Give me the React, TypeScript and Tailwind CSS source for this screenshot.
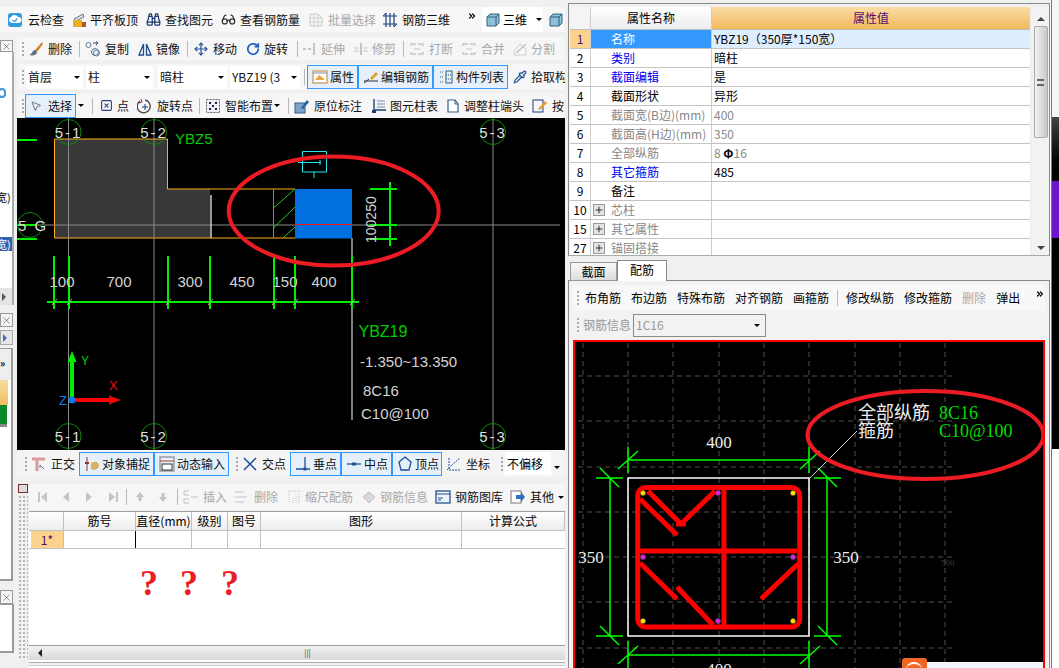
import React from "react";
import {
  Binoculars, Glasses, Move, RotateCw, Pipette, MousePointer2, SquareX, ChevronsRight, Plus, X,
} from "lucide-react";

const CJK = "font-['Noto_Sans_CJK_SC','Liberation_Sans',sans-serif]";

const Arrow = () => (
  <span className="inline-block shrink-0 w-0 h-0 border-x-[3px] border-x-transparent border-t-[3px] border-t-black" />
);

const Sep = ({ r = "" }: { r?: string }) => <span className={`w-px h-4 bg-[#b8b8b8] shrink-0 ${r}`} />;

const Handle = () => (
  <span className="flex flex-col gap-[2px] w-[3px] mr-[3px] ml-[2px] shrink-0">
    <i className="w-[2px] h-[2px] bg-[#aaa]" />
    <i className="w-[2px] h-[2px] bg-[#aaa]" />
    <i className="w-[2px] h-[2px] bg-[#aaa]" />
    <i className="w-[2px] h-[2px] bg-[#aaa]" />
  </span>
);

// small hand drawn toolbar glyphs, 16 box
const G = ({ children }: { children: React.ReactNode }) => (
  <svg width="16" height="16" viewBox="0 0 16 16" fill="none" className="shrink-0">
    {children}
  </svg>
);

const icons: Record<string, React.ReactNode> = {
  cloud: (
    <G>
      <rect x="1" y="1" width="14" height="14" rx="3" fill="#2f9be0" />
      <path d="M3 10a3 3 0 0 1 1-5 4 4 0 0 1 7 0 3 3 0 0 1 1 6H5z" fill="#fff" />
      <path d="M5.500 8l2 1.500 3-3" stroke="#2f9be0" strokeWidth="1.200" />
    </G>
  ),
  slab: (
    <G>
      <path d="M3 7l9-5 1 3-8 4z" fill="#d8dde2" stroke="#6a7a88" />
      <rect x="2" y="8" width="9" height="7" fill="#e8b020" />
      <rect x="11" y="10" width="4" height="5" fill="#a85a28" />
    </G>
  ),
  batch: (
    <G>
      <path d="M2 2h8l4 4v8H2z" stroke="#c8c8c8" />
      <path d="M2 6h12M2 10h12M6 2v12M10 2v12" stroke="#d0d0d0" />
    </G>
  ),
  rebar3d: (
    <G>
      <path d="M1 4h14M1 12h14M4 1v14M8 1v14M12 1v14" stroke="#1d3f7c" strokeWidth="1.200" />
      <path d="M1 4l3-3M12 15l3-3" stroke="#1d3f7c" />
    </G>
  ),
  cube: (
    <G>
      <path d="M2 5l3-3h9v9l-3 3H2z" fill="#8ec0dc" stroke="#34607c" />
      <path d="M2 5h9v9M11 5l3-3" stroke="#34607c" />
    </G>
  ),
  brush: (
    <G>
      <path d="M14 1L7 9l2 2 6-8z" fill="#d08030" />
      <path d="M7 9c-3 0-2 4-6 5 4 1 8 0 8-3z" fill="#5a6f8c" />
    </G>
  ),
  copy: (
    <G>
      <circle cx="3.500" cy="4" r="2.500" stroke="#5a7a9c" />
      <circle cx="10" cy="11" r="3.500" stroke="#5a7a9c" />
      <circle cx="11.500" cy="12" r="3" stroke="#5a7a9c" />
      <path d="M8 2h5l-2-1.500M13 2l-2 2" stroke="#33506e" />
    </G>
  ),
  mirror: (
    <G>
      <path d="M6.500 3L2 14h4.500zM9.500 3L14 14H9.500z" stroke="#1f4f8c" strokeWidth="1.300" />
    </G>
  ),
  extend: (
    <G>
      <path d="M1 8h3M6 8h3" stroke="#c4c4c4" strokeWidth="2" />
      <path d="M12 2v12" stroke="#c4c4c4" strokeWidth="2" />
    </G>
  ),
  trim: (
    <G>
      <path d="M1 7h5M1 10h5M10 7h5M10 10h5" stroke="#c4c4c4" />
      <path d="M8 2v12" stroke="#c4c4c4" strokeWidth="2" />
    </G>
  ),
  breakk: (
    <G>
      <path d="M2 5V3h5M9 3h5v2M2 11v2h5M9 13h5v-2" stroke="#c4c4c4" strokeWidth="1.300" />
      <path d="M5 8h6" stroke="#c4c4c4" />
    </G>
  ),
  split: (
    <G>
      <path d="M2 14h12V8L8 3 2 10z" stroke="#cfcfcf" />
      <path d="M4 12l10-9" stroke="#c4c4c4" strokeWidth="1.500" />
    </G>
  ),
  attr: (
    <G>
      <rect x="1" y="2" width="14" height="12" fill="#fff" stroke="#c08030" />
      <path d="M3 11l4-5 3 2 3 3z" fill="#e8a840" />
      <path d="M1 4h14" stroke="#889" />
    </G>
  ),
  edit: (
    <G>
      <path d="M1 12h14" stroke="#333" />
      <path d="M7 9l6-6 2 2-6 6z" fill="#e0a030" />
      <path d="M1 14l5-4" stroke="#333" />
    </G>
  ),
  list: (
    <G>
      <rect x="8" y="2" width="6" height="12" stroke="#34607c" />
      <path d="M8 6h6M8 10h6M2 3h3M2 8h3M2 13h3" stroke="#34607c" strokeDasharray="1 1" />
    </G>
  ),
  rot: (
    <G>
      <path d="M3 3a6.500 6.500 0 1 0 5-1" stroke="#444" strokeWidth="1.300" />
      <path d="M8 6v6M5 9h6" stroke="#1d3f7c" />
      <path d="M4 1l1 3-3 1" stroke="#a03020" />
    </G>
  ),
  smart: (
    <G>
      <rect x="1.500" y="1.500" width="13" height="13" stroke="#666" strokeDasharray="2 1" fill="#eef" />
      <path d="M4 4h2v2H4zM10 4h2v2h-2zM4 10h2v2H4zM10 10h2v2h-2zM7 7h2v2H7z" fill="#222" />
    </G>
  ),
  mark: (
    <G>
      <rect x="1" y="5" width="10" height="10" fill="#7ea2c8" stroke="#3a5f88" />
      <path d="M7 10l6-8 2 2-6 7z" fill="#2a5fa8" />
    </G>
  ),
  table: (
    <G>
      <path d="M3 1v11h12" stroke="#1d3f7c" strokeWidth="1.400" />
      <path d="M6 3h8M6 6h8M6 9h8" stroke="#6a88b0" />
      <rect x="1" y="12" width="4" height="3" fill="#1d3f7c" />
    </G>
  ),
  head: (
    <G>
      <path d="M3 2h7l3 4v8H3z" stroke="#3a5f88" strokeWidth="1.200" fill="#fff" />
      <path d="M10 2v4h3" stroke="#3a5f88" />
    </G>
  ),
  press: (
    <G>
      <rect x="1" y="2" width="10" height="12" stroke="#1d3f7c" />
      <path d="M6 11l7-8 2 2-7 7z" fill="#e0a030" />
    </G>
  ),
  ortho: (
    <G>
      <path d="M1 3h13M6 3v12" stroke="#d89a9a" strokeWidth="3" />
      <path d="M9 9l4 4M9 9v3" stroke="#5a7a9c" />
    </G>
  ),
  snap: (
    <G>
      <path d="M3 1v14" stroke="#a03020" />
      <path d="M1 7h4" stroke="#a03020" strokeWidth="2" />
      <path d="M7 8c2-3 7-3 8 1 0 4-5 6-8 4z" fill="#d8b060" />
    </G>
  ),
  input: (
    <G>
      <rect x="1" y="1" width="14" height="14" stroke="#777" />
      <path d="M1 5h14" stroke="#b04030" />
      <rect x="3" y="8" width="10" height="6" fill="#fff" stroke="#333" />
    </G>
  ),
  cross: (
    <G>
      <path d="M2 2l12 12M14 2L2 14" stroke="#1d4f98" strokeWidth="1.500" />
    </G>
  ),
  perp: (
    <G>
      <path d="M1 13h14M10 1v12" stroke="#1d4f98" strokeWidth="1.300" />
      <rect x="8.500" y="11.500" width="3" height="3" fill="#1d4f98" />
    </G>
  ),
  mid: (
    <G>
      <path d="M1 8h14" stroke="#1d4f98" strokeWidth="1.300" />
      <rect x="6" y="6.500" width="4" height="3" fill="#1d4f98" />
    </G>
  ),
  vertex: (
    <G>
      <path d="M8 1l6 5-2 8H4L2 6z" stroke="#1d4f98" strokeWidth="1.300" />
    </G>
  ),
  coord: (
    <G>
      <path d="M1 14l6-6 7-6M3 2v12h12" stroke="#1d4f98" strokeDasharray="2 1" />
    </G>
  ),
  first: <G><path d="M3 3v10" stroke="#c4c4c4" strokeWidth="2" /><path d="M11 3v10L5 8z" fill="#c4c4c4" /></G>,
  prev: <G><path d="M8 3v10L2 8z" fill="#c4c4c4" /></G>,
  next: <G><path d="M1 3v10l6-5z" fill="#c4c4c4" /></G>,
  last: <G><path d="M9 3v10" stroke="#c4c4c4" strokeWidth="2" /><path d="M1 3v10l6-5z" fill="#c4c4c4" /></G>,
  up: <G><path d="M5 3l4 5H6.500v4h-3V8H1z" fill="#c4c4c4" /></G>,
  down: <G><path d="M5 13l4-5H6.500V4h-3v4H1z" fill="#c4c4c4" /></G>,
  ins: <G><path d="M6 2H1v4h5M6 10H1v4h5M8 8h7" stroke="#c4c4c4" /></G>,
  del: <G><path d="M1 3h9M1 8h12M1 13h9" stroke="#c4c4c4" /></G>,
  scale: <G><path d="M2 2h11M2 2v12M6 14V8M9 14V6M12 14V4" stroke="#c4c4c4" strokeDasharray="1 1" /></G>,
  info: <G><path d="M2 8l6-5 6 5-6 6z" fill="#d8d8d8" stroke="#c0c0c0" /></G>,
  lib: <G><rect x="1" y="2" width="14" height="12" fill="#eef3fa" stroke="#28508c" strokeWidth="1.300" /><path d="M1 5h14" stroke="#28508c" /><path d="M3 9h5M3 11h3" stroke="#28508c" /></G>,
  other: <G><rect x="1" y="2" width="10" height="12" fill="#fff" stroke="#777" /><path d="M6 6h5V3l4 5-4 5v-3H6z" fill="#2f6fc8" /></G>,
};

const Tool = ({
  icon, node, label, w, dis, on, gap = "gap-[3px]",
}: { icon?: string; node?: React.ReactNode; label?: string; w: string; dis?: boolean; on?: boolean; gap?: string }) => (
  <span
    className={`flex items-center shrink-0 whitespace-nowrap ${gap} ${w} ${on ? "h-[24px] border border-[#3399ff] bg-[#e5f0fb] pl-[4px]" : ""} ${dis ? "text-[#a8a8a8]" : "text-[#111]"}`}
  >
    {node ?? (icon ? icons[icon] : null)}
    {label && <span>{label}</span>}
  </span>
);

const Combo = ({ text, w }: { text: string; w: string }) => (
  <span className={`flex items-center justify-between h-[23px] bg-white pl-[2px] pr-[3px] shrink-0 ${w} text-[12px] text-[#111] overflow-hidden whitespace-nowrap`}>
    <span>{text}</span>
    <Arrow />
  </span>
);

const CloseBox = ({ h }: { h: string }) => (
  <div className={`${h} w-[13px] shrink-0 border border-[#999] bg-[#f4f4f4] flex items-center justify-center`}>
    <X size={11} strokeWidth={1} color="#222" />
  </div>
);

const Sidebar = () => (
  <div className="w-[17px] shrink-0 flex flex-col text-[11px] bg-[#f0f0f0] overflow-hidden">
    <div className="h-[4px] shrink-0" />
    <CloseBox h="h-[12px]" />
    <div className="w-[14px] h-[253px] shrink-0 bg-white border-r-2 border-[#aaa]">
      <div className="h-[36px]" />
      <div className="w-[8px] h-[10px] border-2 border-[#3f97d8] rounded-full -ml-[2px]" />
      <div className="mt-[92px] h-[14px] leading-[14px] -ml-[4px]">宽)</div>
      <div className="mt-[33px] w-[12px] h-[14px] bg-[#2f62b4] text-white leading-[14px] overflow-hidden -indent-[4px]">宽)</div>
      <div className="mt-[37px] h-[17px] bg-[#e4e4e4] flex items-center pl-[2px]">
        <span className="w-0 h-0 border-y-[4px] border-y-transparent border-l-[4px] border-l-[#555]" />
      </div>
    </div>
    <div className="h-[8px] shrink-0" />
    <CloseBox h="h-[14px]" />
    <div className="h-[3px] shrink-0" />
    <div className="h-[15px] shrink-0 w-[13px] border border-[#aaa] bg-[#e6e6e6] flex items-center pl-[2px]">
      <span className="w-0 h-0 border-y-[4px] border-y-transparent border-l-[4px] border-l-[#4a6ab0]" />
    </div>
    <div className="h-[3px] shrink-0" />
    <div className="w-[13px] h-[233px] shrink-0 border-r-2 border-b-2 border-t border-[#999] bg-white flex flex-col">
      <div className="h-[31px] bg-[#eee] pt-[9px] text-[10px] font-bold leading-none">»</div>
      <div className="h-[25px] w-[8px] bg-gradient-to-b from-[#f8dca0] to-[#f0c060]" />
      <div className="h-[22px] w-[7px] bg-[#0a8a2a] border-b-[3px] border-[#888]" />
    </div>
    <div className="h-[9px] shrink-0" />
    <CloseBox h="h-[14px]" />
    <div className="w-[14px] h-[49px] shrink-0 border-r-2 border-b-2 border-t border-[#999] bg-white" />
  </div>
);

const LeftCanvas = () => {
  const bubbles: [number, number, string][] = [
    [68.5, 132, "5-1"], [154, 132, "5-2"], [493, 132, "5-3"],
    [68.5, 436, "5-1"], [154, 436, "5-2"], [493, 436, "5-3"],
  ];
  const dims: [number, string][] = [[62, "100"], [119, "700"], [190, "300"], [242, "450"], [285, "150"], [324, "400"]];
  const ticks = [54, 69, 168, 210, 274, 295, 352];
  return (
    <div className="h-[332px] bg-black shrink-0">
      <svg width="548" height="332" viewBox="17 118 548 332" fontFamily="'Liberation Sans',sans-serif">
        <path d="M54.500 139H167.500V189H210V238H54.500z" fill="#383838" />
        <path d="M295 189H167.500V139H54.500V238H295" fill="none" stroke="#ffae1a" />
        <path d="M68.500 118V450M154 118V450M493 118V450M17 225H560" stroke="#8a8a8a" />
        <path d="M211 195V238" stroke="#fff" strokeWidth="1.200" />
        <path d="M273.500 189V238M273.500 208L295 189M273.500 228L295 207M283 238L295 227" stroke="#22cc22" />
        <rect x="295" y="189" width="57" height="49.500" fill="#0070e0" />
        <path d="M295 224.500H352" stroke="#ff1010" />
        <path d="M352 238V420" stroke="#fff" />
        <path d="M302.500 151.500H326.500V172H302.500zM302.500 162.500H321M298 162.500H302M320 160V165M314 172V178" fill="none" stroke="#22e8ee" />
        {bubbles.map(([x, y, t], i) => (
          <g key={i}>
            <circle cx={x} cy={y} r="12.500" fill="none" stroke="#0c8a0c" />
            <text x={x} y={y + 6} textAnchor="middle" fontSize="15" fill="#ddd" letterSpacing="2">{t}</text>
          </g>
        ))}
        <path d="M17 140H37M17 225H37M17 239H37" stroke="#00ee00" strokeWidth="2" />
        <circle cx="30" cy="225" r="12.500" fill="none" stroke="#0c8a0c" />
        <text x="18" y="231" fontSize="15" fill="#ddd" letterSpacing="2">5 G</text>
        <text x="175" y="144" fontSize="15" fill="#00cc00">YBZ5</text>
        <path d="M47 302H359M54 256V309M69 256V309M168 256V309M210 256V309M274 256V309M295 256V309M352 256V309" stroke="#00ee00" strokeWidth="2" />
        {ticks.map((x) => <path key={x} d={`M${x - 2} 305L${x + 3} 299`} stroke="#eee" strokeWidth="0.700" />)}
        {dims.map(([x, t]) => (
          <text key={t} x={x} y={287} textAnchor="middle" fontSize="15" fill="#d4d4d4">{t}</text>
        ))}
        <path d="M390 182V246M370 189H397M370 225H397M370 239H397" stroke="#00ee00" strokeWidth="2" />
        <text transform="translate(376 243) rotate(-90)" fontSize="14" fill="#d4d4d4">100250</text>
        <text x="358.500" y="337" fontSize="16" fill="#00cc00">YBZ19</text>
        <text x="360" y="367" fontSize="15" fill="#d4d4d4">-1.350~13.350</text>
        <text x="363" y="396" fontSize="15" fill="#d4d4d4">8C16</text>
        <text x="361" y="419" fontSize="15" fill="#d4d4d4">C10@100</text>
        <path d="M72 398V360" stroke="#00ee00" strokeWidth="4" />
        <path d="M72 351L76.500 362H67.500z" fill="#00ee00" />
        <path d="M74 400H110" stroke="#ff0000" strokeWidth="4" />
        <path d="M121 400L109 395.500V404.500z" fill="#ff0000" />
        <circle cx="72" cy="400" r="3.500" fill="#0a7aee" />
        <text x="81" y="365" fontSize="12" fill="#00cc00">Y</text>
        <text x="109" y="390" fontSize="13" fill="#ee1111">X</text>
        <text x="59" y="405" fontSize="13" fill="#1a7aee">Z</text>
        <ellipse cx="333.700" cy="211" rx="105" ry="54.500" fill="none" stroke="#ed1c24" strokeWidth="4" />
      </svg>
    </div>
  );
};

const SnapBar = () => (
  <div className="h-[27px] flex items-center bg-[#f4f4f4] text-[12px] shrink-0 pl-[6px]">
    <Handle />
    <Tool icon="ortho" label="正交" w="w-[48px]" gap="gap-[4px]" />
    <Tool icon="snap" label="对象捕捉" w="w-[75px]" on gap="gap-[2px]" />
    <Tool icon="input" label="动态输入" w="w-[75px]" on gap="gap-[2px]" />
    <span className="w-[5px] shrink-0" />
    <Handle />
    <Tool icon="cross" label="交点" w="w-[48px]" gap="gap-[4px]" />
    <Tool icon="perp" label="垂点" w="w-[51px]" on gap="gap-[2px]" />
    <Tool icon="mid" label="中点" w="w-[51px]" on gap="gap-[2px]" />
    <Tool icon="vertex" label="顶点" w="w-[50px]" on gap="gap-[2px]" />
    <span className="w-[4px] shrink-0" />
    <Tool icon="coord" label="坐标" w="w-[51px]" gap="gap-[4px]" />
    <span className="w-[2px] shrink-0" />
    <Handle />
    <span className="flex items-center w-[46px] h-[23px] bg-white pl-[2px] -ml-[2px] shrink-0 whitespace-nowrap">不偏移</span>
    <span className="ml-[3px]"><Arrow /></span>
  </div>
);

const BarGrid = () => {
  const heads: [string, string][] = [
    ["", "w-[35px]"], ["筋号", "w-[72px]"], ["直径(mm)", "w-[56px]"], ["级别", "w-[36px]"],
    ["图号", "w-[33px]"], ["图形", "w-[201px]"], ["计算公式", "flex-1"],
  ];
  return (
    <div className="flex-1 flex min-h-0 bg-[#f0f0f0]">
      <div className="w-[12px] shrink-0 flex flex-col pb-[8px]">
        <div className="w-[10px] h-[9px] mt-[7px] ml-px border border-[#7a2a2a] bg-[#ddd] shrink-0" />
        <div className="flex-1 mt-[2px] mx-px bg-[radial-gradient(#b5b5b5_1px,transparent_1px)] bg-[length:4px_4px]" />
      </div>
      <div className="flex-1 flex flex-col min-w-0 pt-[7px] overflow-hidden">
        <div className="h-[26px] flex items-center text-[12px] shrink-0 bg-[#f6f6f6] pl-[7px] whitespace-nowrap">
          <Tool icon="first" w="w-[25px]" />
          <Tool icon="prev" w="w-[24px]" />
          <Tool icon="next" w="w-[23px]" />
          <Tool icon="last" w="w-[18px]" />
          <Sep r="mr-[8px]" />
          <Tool icon="up" w="w-[23px]" />
          <Tool icon="down" w="w-[19px]" />
          <Sep r="mr-[5px]" />
          <Tool icon="ins" label="插入" w="w-[51px]" dis gap="gap-[4px]" />
          <Tool icon="del" label="删除" w="w-[53px]" dis gap="gap-[4px]" />
          <Tool icon="scale" label="缩尺配筋" w="w-[74px]" dis gap="gap-[2px]" />
          <Tool icon="info" label="钢筋信息" w="w-[74px]" dis />
          <Tool icon="lib" label="钢筋图库" w="w-[75px]" gap="gap-[4px]" />
          <Tool icon="other" label="其他" w="w-[48px]" gap="gap-[4px]" />
          <Arrow />
        </div>
        <div className="h-[19px] flex mt-px border-t border-[#a0a0a0] bg-gradient-to-b from-white to-[#ececec] text-[12px] shrink-0">
          {heads.map(([t, w], i) => (
            <span key={i} className={`${w} shrink-0 text-center leading-[18px] border-r border-[#c0c0c0] whitespace-nowrap overflow-hidden`}>{t}</span>
          ))}
        </div>
        <div className="h-[19px] flex border-y border-[#c0c0c0] text-[12px] bg-white shrink-0">
          <span className="w-[35px] pl-[2px] border-r border-[#c0c0c0]">
            <span className="block h-full bg-[#fbd38d] text-center text-[#4a0a5a] leading-[17px]">1*</span>
          </span>
          <span className="w-[72px] border-r border-black" />
          <span className="w-[56px] border-r border-[#c0c0c0]" />
          <span className="w-[36px] border-r border-[#c0c0c0]" />
          <span className="w-[33px] border-r border-[#c0c0c0]" />
          <span className="w-[201px] border-r border-[#c0c0c0]" />
        </div>
        <div className="flex-1 bg-white flex pl-[111px] pt-[16px] text-[#ee1c24] text-[36px] leading-none font-bold font-['Liberation_Serif',serif]">
          <span className="w-[40px]">?</span>
          <span className="w-[41px]">?</span>
          <span className="w-[41px]">?</span>
        </div>
        <div className="h-[15px] flex items-center bg-gradient-to-b from-[#f2f2f2] to-[#d8d8d8] border-t border-[#999] shrink-0">
          <span className="w-[21px] flex justify-center">
            <span className="w-0 h-0 border-y-[4px] border-y-transparent border-r-[4px] border-r-[#222]" />
          </span>
          <span className="flex-1 text-center text-[8px] leading-none text-[#444]">|||</span>
        </div>
        <div className="h-[2px] bg-white shrink-0" />
        <div className="h-[3px] border-t border-[#aaa] shrink-0" />
        <div className="h-[3px] bg-white border-t border-[#ccc] shrink-0" />
      </div>
    </div>
  );
};

const LeftPane = () => (
  <div className={`w-[565px] shrink-0 flex flex-col overflow-hidden ${CJK}`}>
    <div className="h-[36px] pt-[7px] bg-[#f0f0f0] shrink-0">
      <div className="h-[25px] flex items-center pl-[7px] text-[12px] bg-[#f7f7f7] whitespace-nowrap overflow-hidden">
        <Tool icon="cloud" label="云检查" w="w-[64px]" gap="gap-[5px]" />
        <Tool icon="slab" label="平齐板顶" w="w-[75px]" />
        <Tool node={<Binoculars size={15} color="#1f3a6e" className="shrink-0" />} label="查找图元" w="w-[75px]" gap="gap-[4px]" />
        <Tool node={<Glasses size={15} color="#333" className="shrink-0" />} label="查看钢筋量" w="w-[87px]" gap="gap-[4px]" />
        <Tool icon="batch" label="批量选择" w="w-[74px]" dis gap="gap-[4px]" />
        <Tool icon="rebar3d" label="钢筋三维" w="w-[85px]" gap="gap-[4px]" />
        <span className="w-[15px] shrink-0"><ChevronsRight size={10} strokeWidth={3} className="mb-[8px]" /></span>
        <span className="flex items-center gap-[2px] w-[61px] h-[25px] bg-white pl-[3px] shrink-0">
          {icons.cube}三维<span className="ml-[7px] flex"><Arrow /></span>
        </span>
        <span className="ml-[5px]">{icons.cube}</span>
      </div>
    </div>
    <div className="flex-1 flex min-h-0">
      <Sidebar />
      <div className="flex-1 flex flex-col min-w-0">
        <div className="h-[23px] mt-px flex items-center text-[12px] shrink-0 bg-[#f6f6f6] pl-[3px] whitespace-nowrap overflow-hidden">
          <Handle />
          <Tool icon="brush" label="删除" w="w-[51px]" gap="gap-[4px]" />
          <Sep r="mr-[5px]" />
          <Tool icon="copy" label="复制" w="w-[52px]" gap="gap-[4px]" />
          <Tool icon="mirror" label="镜像" w="w-[50px]" />
          <Sep r="mr-[6px]" />
          <Tool node={<Move size={14} color="#1d4f98" className="shrink-0" />} label="移动" w="w-[52px]" gap="gap-[5px]" />
          <Tool node={<RotateCw size={14} color="#1d5fc0" strokeWidth={3} className="shrink-0" />} label="旋转" w="w-[51px]" gap="gap-[4px]" />
          <Sep r="mr-[4px]" />
          <Tool icon="extend" label="延伸" w="w-[51px]" dis />
          <Tool icon="trim" label="修剪" w="w-[50px]" dis />
          <Sep r="mr-[5px]" />
          <Tool icon="breakk" label="打断" w="w-[52px]" dis gap="gap-[4px]" />
          <Tool icon="breakk" label="合并" w="w-[51px]" dis gap="gap-[4px]" />
          <Tool icon="split" label="分割" w="w-[53px]" dis />
        </div>
        <div className="h-[26px] mt-[4px] flex items-center text-[12px] shrink-0 bg-[#f6f6f6] pl-[3px] whitespace-nowrap overflow-hidden">
          <Handle />
          <span className="-ml-[2px] mr-[3px] flex"><Combo text="首层" w="w-[57px]" /></span>
          <span className="mr-[5px] flex"><Combo text="柱" w="w-[67px]" /></span>
          <span className="mr-[3px] flex"><Combo text="暗柱" w="w-[69px]" /></span>
          <span className="mr-[4px] flex"><Combo text="YBZ19 (3" w="w-[70px]" /></span>
          <Sep r="mr-[2px]" />
          <Tool icon="attr" label="属性" w="w-[51px]" on gap="gap-[2px]" />
          <Tool icon="edit" label="编辑钢筋" w="w-[75px]" on gap="gap-[2px]" />
          <Tool icon="list" label="构件列表" w="w-[75px]" on gap="gap-[2px]" />
          <span className="w-[5px] shrink-0" />
          <Tool node={<Pipette size={14} color="#1d4f98" className="shrink-0" />} label="拾取构件" w="w-[70px]" gap="gap-[4px]" />
        </div>
        <div className="h-[25px] mt-[3px] flex items-center text-[12px] shrink-0 bg-[#f6f6f6] pl-[3px] whitespace-nowrap overflow-hidden">
          <Handle />
          <span className="-ml-[3px] flex">
            <Tool node={<MousePointer2 size={12} color="#777" className="shrink-0" />} label="选择" w="w-[51px]" on gap="gap-[6px]" />
          </span>
          <span className="ml-[2px] mr-[8px] flex"><Arrow /></span>
          <Sep r="mr-[7px]" />
          <Tool node={<SquareX size={13} color="#2a3f88" className="shrink-0" />} label="点" w="w-[37px]" gap="gap-[4px]" />
          <Tool icon="rot" label="旋转点" w="w-[62px]" gap="gap-[4px]" />
          <Sep r="mr-[5px]" />
          <Tool icon="smart" label="智能布置" w="w-[69px]" gap="gap-[4px]" />
          <span className="mr-[8px] flex"><Arrow /></span>
          <Sep r="mr-[5px]" />
          <Tool icon="mark" label="原位标注" w="w-[77px]" gap="gap-[4px]" />
          <Tool icon="table" label="图元柱表" w="w-[74px]" />
          <Tool icon="head" label="调整柱端头" w="w-[87px]" />
          <Tool icon="press" label="按" w="w-[33px]" gap="gap-[4px]" />
        </div>
        <LeftCanvas />
        <SnapBar />
        <BarGrid />
      </div>
    </div>
  </div>
);

type Row = { n: string; name: string; val?: React.ReactNode; tone: "sel" | "blue" | "black" | "gray"; plus?: boolean };
const rows: Row[] = [
  { n: "1", name: "名称", val: "YBZ19（350厚*150宽）", tone: "sel" },
  { n: "2", name: "类别", val: "暗柱", tone: "blue" },
  { n: "3", name: "截面编辑", val: "是", tone: "blue" },
  { n: "4", name: "截面形状", val: "异形", tone: "black" },
  { n: "5", name: "截面宽(B边)(mm)", val: "400", tone: "gray" },
  { n: "6", name: "截面高(H边)(mm)", val: "350", tone: "gray" },
  { n: "7", name: "全部纵筋", val: <>8 <b className="text-black">Φ</b>16</>, tone: "gray" },
  { n: "8", name: "其它箍筋", val: "485", tone: "blue" },
  { n: "9", name: "备注", tone: "black" },
  { n: "10", name: "芯柱", tone: "gray", plus: true },
  { n: "15", name: "其它属性", tone: "gray", plus: true },
  { n: "27", name: "锚固搭接", tone: "gray", plus: true },
];

const nameTone = { sel: "bg-[#3399ff] text-white", blue: "text-[#0000ee]", gray: "text-[#888]", black: "text-black" };

const PropsTable = () => (
  <div className="h-[253px] border border-[#8a8a8a] border-b-[#aaa] bg-[#f0f0f0] pl-px pt-[3px] flex shrink-0 overflow-hidden">
    <div className="w-[460px] shrink-0 overflow-hidden bg-white">
      <div className="h-[23px] flex text-[12px] border-b border-[#c0c0c0]">
        <span className="w-[21px] bg-[#f4f4f4] border-r border-[#ccc]" />
        <span className="w-[121px] text-center leading-[22px] bg-gradient-to-b from-white to-[#ececec] border-r border-[#ccc]">属性名称</span>
        <span className="flex-1 text-center leading-[22px] bg-gradient-to-b from-[#fbdca4] to-[#f2b95c] text-[#5a0a6e]">属性值</span>
      </div>
      {rows.map((r) => (
        <div key={r.n} className={`h-[19px] flex border-b border-[#c4c4c4] text-[12px] leading-[18px] ${r.tone === "sel" ? "bg-[#dfeeff]" : ""}`}>
          <span className={`w-[21px] text-center border-r border-[#ccc] ${r.tone === "sel" ? "bg-[#fbd38d] text-[#5a0a6e]" : ""}`}>{r.n}</span>
          <span className={`w-[121px] border-r border-[#ccc] flex items-center whitespace-nowrap ${r.plus ? "pl-[2px]" : "pl-[20px]"} ${nameTone[r.tone]}`}>
            {r.plus && (
              <span className="w-[12px] h-[12px] mr-[6px] border border-[#999] bg-[#e4e4e4] flex items-center justify-center">
                <Plus size={10} color="#111" strokeWidth={2} />
              </span>
            )}
            {r.name}
          </span>
          <span className={`pl-[2px] whitespace-nowrap ${r.tone === "gray" ? "text-[#888]" : "text-black"}`}>{r.val}</span>
        </div>
      ))}
    </div>
    <div className="w-[17px] ml-[2px] flex flex-col items-center bg-[#f2f2f2] pt-[10px] pb-[5px]">
      <span className="w-0 h-0 border-x-[4px] border-x-transparent border-b-[4px] border-b-[#444]" />
      <span className="mt-[5px] w-[14px] h-[112px] border border-[#aaa] rounded-[2px] bg-gradient-to-r from-[#f4f4f4] to-[#c8c8c8] flex items-center justify-center">
        <span className="w-[7px] h-[7px] border-y-2 border-[#666]" />
      </span>
      <span className="flex-1" />
      <span className="w-0 h-0 border-x-[4px] border-x-transparent border-t-[4px] border-t-[#444]" />
    </div>
  </div>
);

const RightCanvas = () => {
  const vs = [583, 628, 673, 719, 764, 809, 855, 900, 945];
  const hs = [376, 421, 467, 512, 557, 602, 648];
  const dots: [number, number, string][] = [
    [643, 493, "#ffe000"], [718, 493, "#e020e0"], [793, 493, "#ffe000"], [643, 557, "#e020e0"],
    [793, 557, "#e020e0"], [643, 621, "#ffe000"], [718, 621, "#e020e0"], [793, 621, "#ffe000"],
  ];
  return (
    <div className="flex-1 min-h-0 border-[2px] border-b-0 border-[#ff0000] bg-black overflow-hidden relative">
      <svg width="468" height="326" viewBox="575 342 468 326" fontFamily="'Liberation Serif','Noto Sans CJK SC',serif">
        {vs.map((x) => <path key={x} d={`M${x} 343V668`} stroke="#4e4e4e" strokeDasharray="5 4" />)}
        {hs.map((y) => <path key={y} d={`M578 ${y}H953`} stroke="#4e4e4e" strokeDasharray="5 4" />)}
        <rect x="628" y="478" width="181" height="158" fill="none" stroke="#fff" strokeWidth="1.500" />
        <path d="M628 447V473M809 447V473M628 460H809M618 469L638 451M800 469L820 451" stroke="#00ff00" strokeWidth="1.500" />
        <path d="M596 478H623M596 636H623M610 478V636M600 468L619 487M600 626L619 645" stroke="#00ff00" strokeWidth="1.500" />
        <path d="M814 478H841M814 636H841M827 478V636M818 468L837 487M818 626L837 645" stroke="#00ff00" strokeWidth="1.500" />
        <path d="M628 641V668M809 641V668M628 655H809M618 664L638 646M800 664L820 646" stroke="#00ff00" strokeWidth="1.500" />
        <g stroke="#ff0000" strokeWidth="5" fill="none">
          <rect x="637.700" y="487.500" width="162" height="139.500" rx="8" />
          <path d="M724 487V627M640 551H797M648 491L680 523M680 525L715 491M640 499L677 535M640 563L677 599M677 587L713 625M798 564L761 599M676 524H686" />
        </g>
        {dots.map(([x, y, c], i) => (
          <circle key={i} cx={x} cy={y} r="2.600" fill={c} stroke="#444" strokeWidth="0.500" />
        ))}
        <text x="719" y="448" textAnchor="middle" fontSize="17" fill="#eee">400</text>
        <text x="591" y="563" textAnchor="middle" fontSize="17" fill="#eee">350</text>
        <text x="846" y="563" textAnchor="middle" fontSize="17" fill="#eee">350</text>
        <text x="719" y="675" textAnchor="middle" fontSize="17" fill="#eee">400</text>
        <path d="M810 478L857 431" stroke="#fff" strokeWidth="0.800" />
        <text x="858" y="419" fontSize="18" fill="#eee">全部纵筋</text>
        <text x="858" y="437" fontSize="18" fill="#eee">箍筋</text>
        <text x="939" y="419" fontSize="18" fill="#00dd00">8C16</text>
        <text x="939" y="437" fontSize="18" fill="#00dd00">C10@100</text>
        <text x="941" y="566" fontSize="9" fill="#3a3a3a">500</text>
        <ellipse cx="925.500" cy="435" rx="118" ry="44" fill="none" stroke="#ed1c24" strokeWidth="4" />
      </svg>
      <div className="absolute left-[327px] bottom-0 w-[25px] h-[10px] bg-[#f26522] rounded-t-[3px] overflow-hidden">
        <div className="w-[16px] h-[8px] mt-[4px] ml-[4px] border-t-2 border-white rounded-t-full" />
      </div>
      <div className="absolute left-[352px] bottom-0 right-0 h-[6px] bg-[#f3f6fa]" />
    </div>
  );
};

const RightPane = () => (
  <div className={`flex-1 flex min-w-0 bg-[#f0f0f0] ${CJK}`}>
    <div className="w-[485px] shrink-0 pl-[3px] pt-[3px] flex flex-col">
      <PropsTable />
      <div className="h-[25px] flex items-end pl-[2px] text-[12px] shrink-0 relative z-10">
        <span className="w-[47px] h-[19px] border border-[#999] bg-gradient-to-b from-[#f8f8f8] to-[#dcdcdc] text-center leading-[18px]">截面</span>
        <span className="w-[50px] h-[21px] border border-[#8a8a8a] border-b-0 bg-white text-center leading-[18px]">配筋</span>
      </div>
      <div className="flex-1 min-h-0 border border-b-0 border-[#8a8a8a] -mt-px bg-[#f2f2f2] flex flex-col px-[4px] pt-[4px]">
        <div className="h-[26px] flex items-center text-[12px] whitespace-nowrap shrink-0 pl-[2px] gap-[10px] bg-[#f8f8f8]">
          <span className="w-0 flex"><Handle /></span>
          <span>布角筋</span>
          <span>布边筋</span>
          <span>特殊布筋</span>
          <span>对齐钢筋</span>
          <span>画箍筋</span>
          <Sep r="-mx-[2px]" />
          <span>修改纵筋</span>
          <span>修改箍筋</span>
          <span className="text-[#aaa]">删除</span>
          <span>弹出</span>
          <ChevronsRight size={10} strokeWidth={3} className="mb-[8px] ml-[5px]" />
        </div>
        <div className="h-[24px] mt-[2px] flex items-center text-[12px] shrink-0 pl-[2px] text-[#999] whitespace-nowrap">
          <Handle />
          <span>钢筋信息</span>
          <span className="ml-[2px] w-[133px] h-[23px] border border-[#8a8a8a] flex items-center justify-between px-[2px]">
            1C16 <span className="mr-[3px] flex"><Arrow /></span>
          </span>
        </div>
        <div className="h-[3px] shrink-0" />
        <RightCanvas />
      </div>
    </div>
    <div className="w-[1px] bg-[#fafafa] shrink-0" />
    <div className="w-[1px] bg-[#777] shrink-0" />
    <div className="flex-1 flex flex-col">
      <div className="h-[117px] bg-[#f6f6f6]" />
      <div className="h-[64px] bg-gradient-to-b from-[#444] to-black" />
      <div className="h-[57px] bg-[#6a16c8]" />
      <div className="h-[211px] bg-black" />
      <div className="flex-1 bg-white" />
    </div>
  </div>
);

export default function App() {
  return (
    <div className="w-[1059px] h-[668px] flex overflow-hidden bg-[#f0f0f0] text-black">
      <LeftPane />
      <RightPane />
    </div>
  );
}
